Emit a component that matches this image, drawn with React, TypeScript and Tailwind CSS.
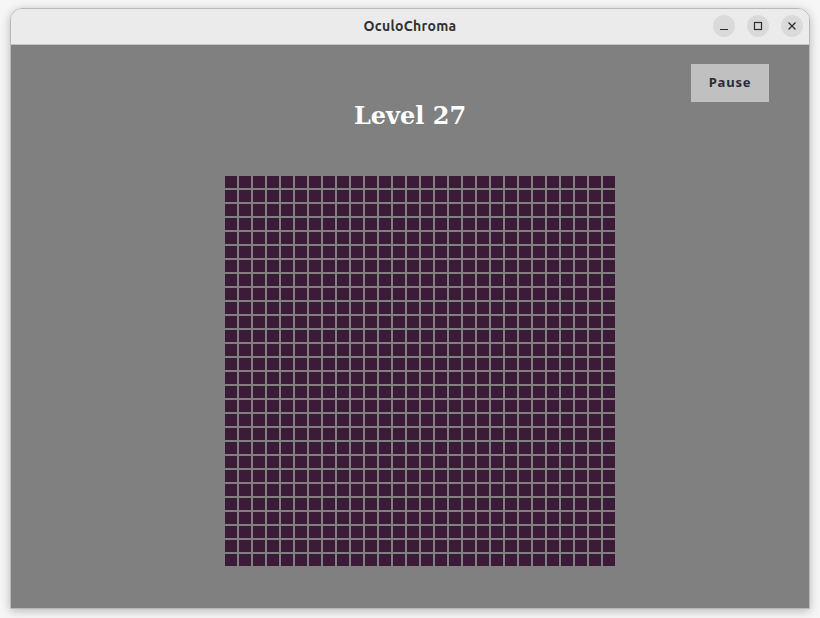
import React from "react";

const N = 28;

export default function App() {
  const cells = Array.from({ length: N * N });
  return (
    <div className="w-[820px] h-[618px] bg-[#f6f6f6] pt-[8px] px-[10px] pb-[9px] overflow-hidden">
      <div className="w-full h-full flex flex-col rounded-t-[12px] overflow-hidden border border-[#b8b8b8] shadow-[0_2px_10px_rgba(0,0,0,0.25)]">
        <div className="h-[36px] shrink-0 bg-[#ebebeb] border-b border-[#c4c4c4] flex items-center relative">
          <div className="flex-1 text-center text-[14px] font-bold text-[#303030] tracking-[0.3px] [font-family:Ubuntu,'Noto_Sans','DejaVu_Sans',sans-serif]">
            OculoChroma
          </div>
          <div className="absolute right-[6px] top-[6px] flex gap-[12px]">
            <div className="w-[22px] h-[22px] rounded-full bg-[#dadada] flex items-center justify-center">
              <svg width="10" height="10" viewBox="0 0 10 10">
                <line x1="1" y1="8.5" x2="9" y2="8.5" stroke="#2e2e2e" strokeWidth="1.2" />
              </svg>
            </div>
            <div className="w-[22px] h-[22px] rounded-full bg-[#dadada] flex items-center justify-center">
              <svg width="10" height="10" viewBox="0 0 10 10">
                <rect x="1.5" y="1.5" width="7" height="7" fill="none" stroke="#2e2e2e" strokeWidth="1.2" />
              </svg>
            </div>
            <div className="w-[22px] h-[22px] rounded-full bg-[#dadada] flex items-center justify-center">
              <svg width="10" height="10" viewBox="0 0 10 10">
                <path d="M1.5 1.5 L8.5 8.5 M8.5 1.5 L1.5 8.5" stroke="#2e2e2e" strokeWidth="1.3" />
              </svg>
            </div>
          </div>
        </div>
        <div className="flex-1 bg-[#808080] flex flex-col items-center">
          <div className="w-full flex justify-end pt-[19px] pr-[40px]">
            <button className="w-[78px] h-[38px] bg-[#c0c0c0] text-[13px] font-bold text-[#2a2a3a] tracking-[0.8px] [font-family:'Noto_Sans',sans-serif]">
              Pause
            </button>
          </div>
          <div className="h-[28px] leading-[28px] text-[24px] font-bold text-white [font-family:'DejaVu_Serif',serif]">
            Level 27
          </div>
          <div className="mt-[46px] ml-[20px] grid grid-cols-[repeat(28,12px)] gap-[2px]">
            {cells.map((_, i) => (
              <div key={i} className="w-[12px] h-[12px] bg-[#3c1b39]" />
            ))}
          </div>
        </div>
      </div>
    </div>
  );
}
